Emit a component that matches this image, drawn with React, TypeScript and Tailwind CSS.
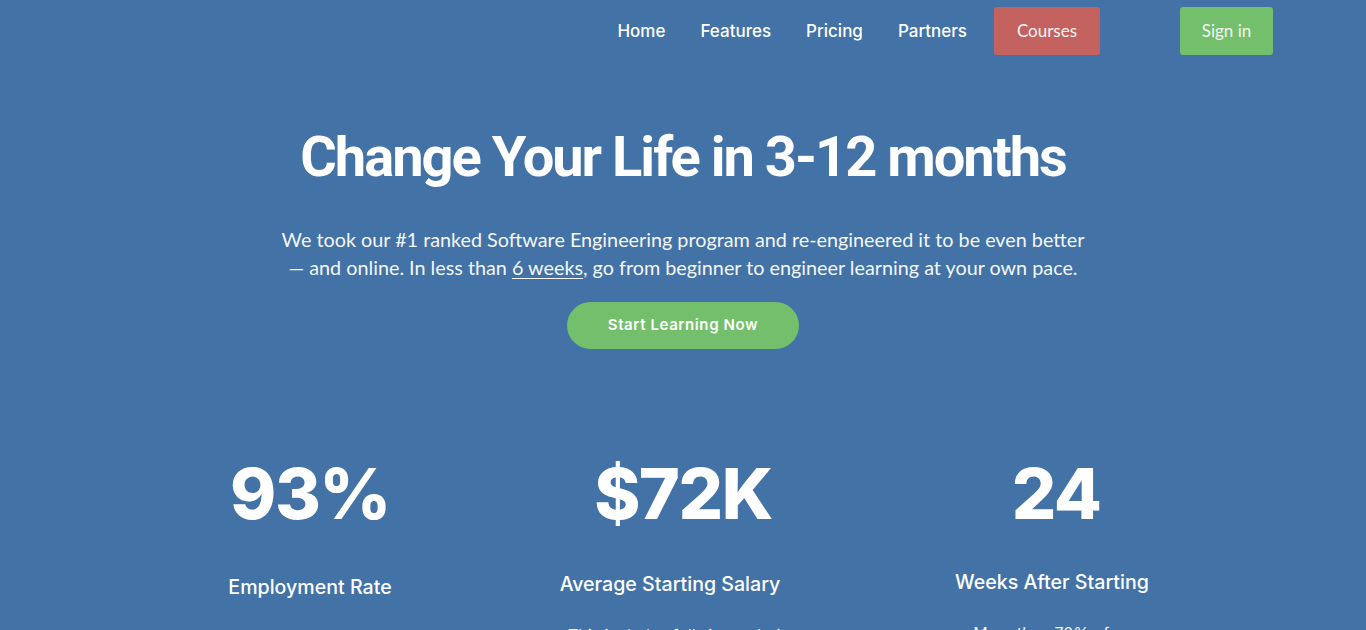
import React from 'react';

const navLinks = ['Home', 'Features', 'Pricing', 'Partners'];

const stats = [
  {
    value: '93%',
    label: 'Employment Rate',
    labelClass: 'mt-[40px]',
    text: '',
    textClass: '',
  },
  {
    value: '$72K',
    label: 'Average Starting Salary',
    labelClass: 'mt-[37px] pr-[26px]',
    text: 'This includes full-time salaries and bonuses',
    textClass: 'max-w-[250px]',
  },
  {
    value: '24',
    label: 'Weeks After Starting',
    labelClass: 'mt-[35px] pr-[8px]',
    text: 'More than 70% of our students get hired',
    textClass: 'max-w-[230px]',
  },
];

const App: React.FC = () => {
  return (
    <div className="min-h-[630px] w-full bg-[#4272a6] text-white overflow-hidden">
      {/* top navigation */}
      <header className="flex items-center justify-end pt-[7px] pr-[93px] h-[55px]">
        <nav className="flex items-center gap-[35px] font-['Inter',sans-serif] font-medium text-[17px]">
          {navLinks.map(link => (
            <a key={link} href="#" className="leading-none">
              {link}
            </a>
          ))}
        </nav>
        <a
          href="#"
          className="ml-[27px] w-[106px] h-[48px] flex items-center justify-center bg-[#c46260] rounded-[3px] font-['Lato',sans-serif] text-[17px] text-[#f5f5f5]"
        >
          Courses
        </a>
        <a
          href="#"
          className="ml-[80px] w-[93px] h-[48px] flex items-center justify-center bg-[#73bf6b] rounded-[3px] font-['Lato',sans-serif] text-[17px] text-[#f5f5f5]"
        >
          Sign in
        </a>
      </header>

      {/* hero */}
      <section className="flex flex-col items-center text-center pt-[70px]">
        <h1 className="font-['Roboto',sans-serif] font-bold text-[56px] leading-[64px] tracking-[-2px]">
          Change Your Life in 3-12 months
        </h1>
        <p className="mt-[36px] font-['Lato',sans-serif] text-[19.8px] leading-[28px] text-[#f4f6f9]">
          We took our #1 ranked Software Engineering program and re-engineered it to be even better
          <br />— and online. In less than{' '}
          <a href="#" className="underline underline-offset-[3px]">6 weeks</a>, go from beginner to engineer
          learning at your own pace.
        </p>
        <button className="mt-[21px] w-[232px] h-[47px] rounded-full bg-[#73bf6b] font-['Inter',sans-serif] font-semibold text-[15px] tracking-[0.6px]">
          Start Learning Now
        </button>
      </section>

      {/* stats */}
      <section className="mx-auto w-[1119px] grid grid-cols-3 mt-[105px]">
        {stats.map(s => (
          <div key={s.value} className="flex flex-col items-center">
            <div className="font-['Inter',sans-serif] font-extrabold text-[70px] leading-[80px] tracking-[-1.5px]">
              {s.value}
            </div>
            <div className={`${s.labelClass} font-['Inter',sans-serif] font-medium text-[19.6px] leading-[26px]`}>
              {s.label}
            </div>
            {s.text && (
              <p className={`${s.textClass} mt-[26px] text-center font-['Inter',sans-serif] text-[16px] leading-[24px] text-[#eef2f7]`}>
                {s.text}
              </p>
            )}
          </div>
        ))}
      </section>
    </div>
  );
};

export default App;
